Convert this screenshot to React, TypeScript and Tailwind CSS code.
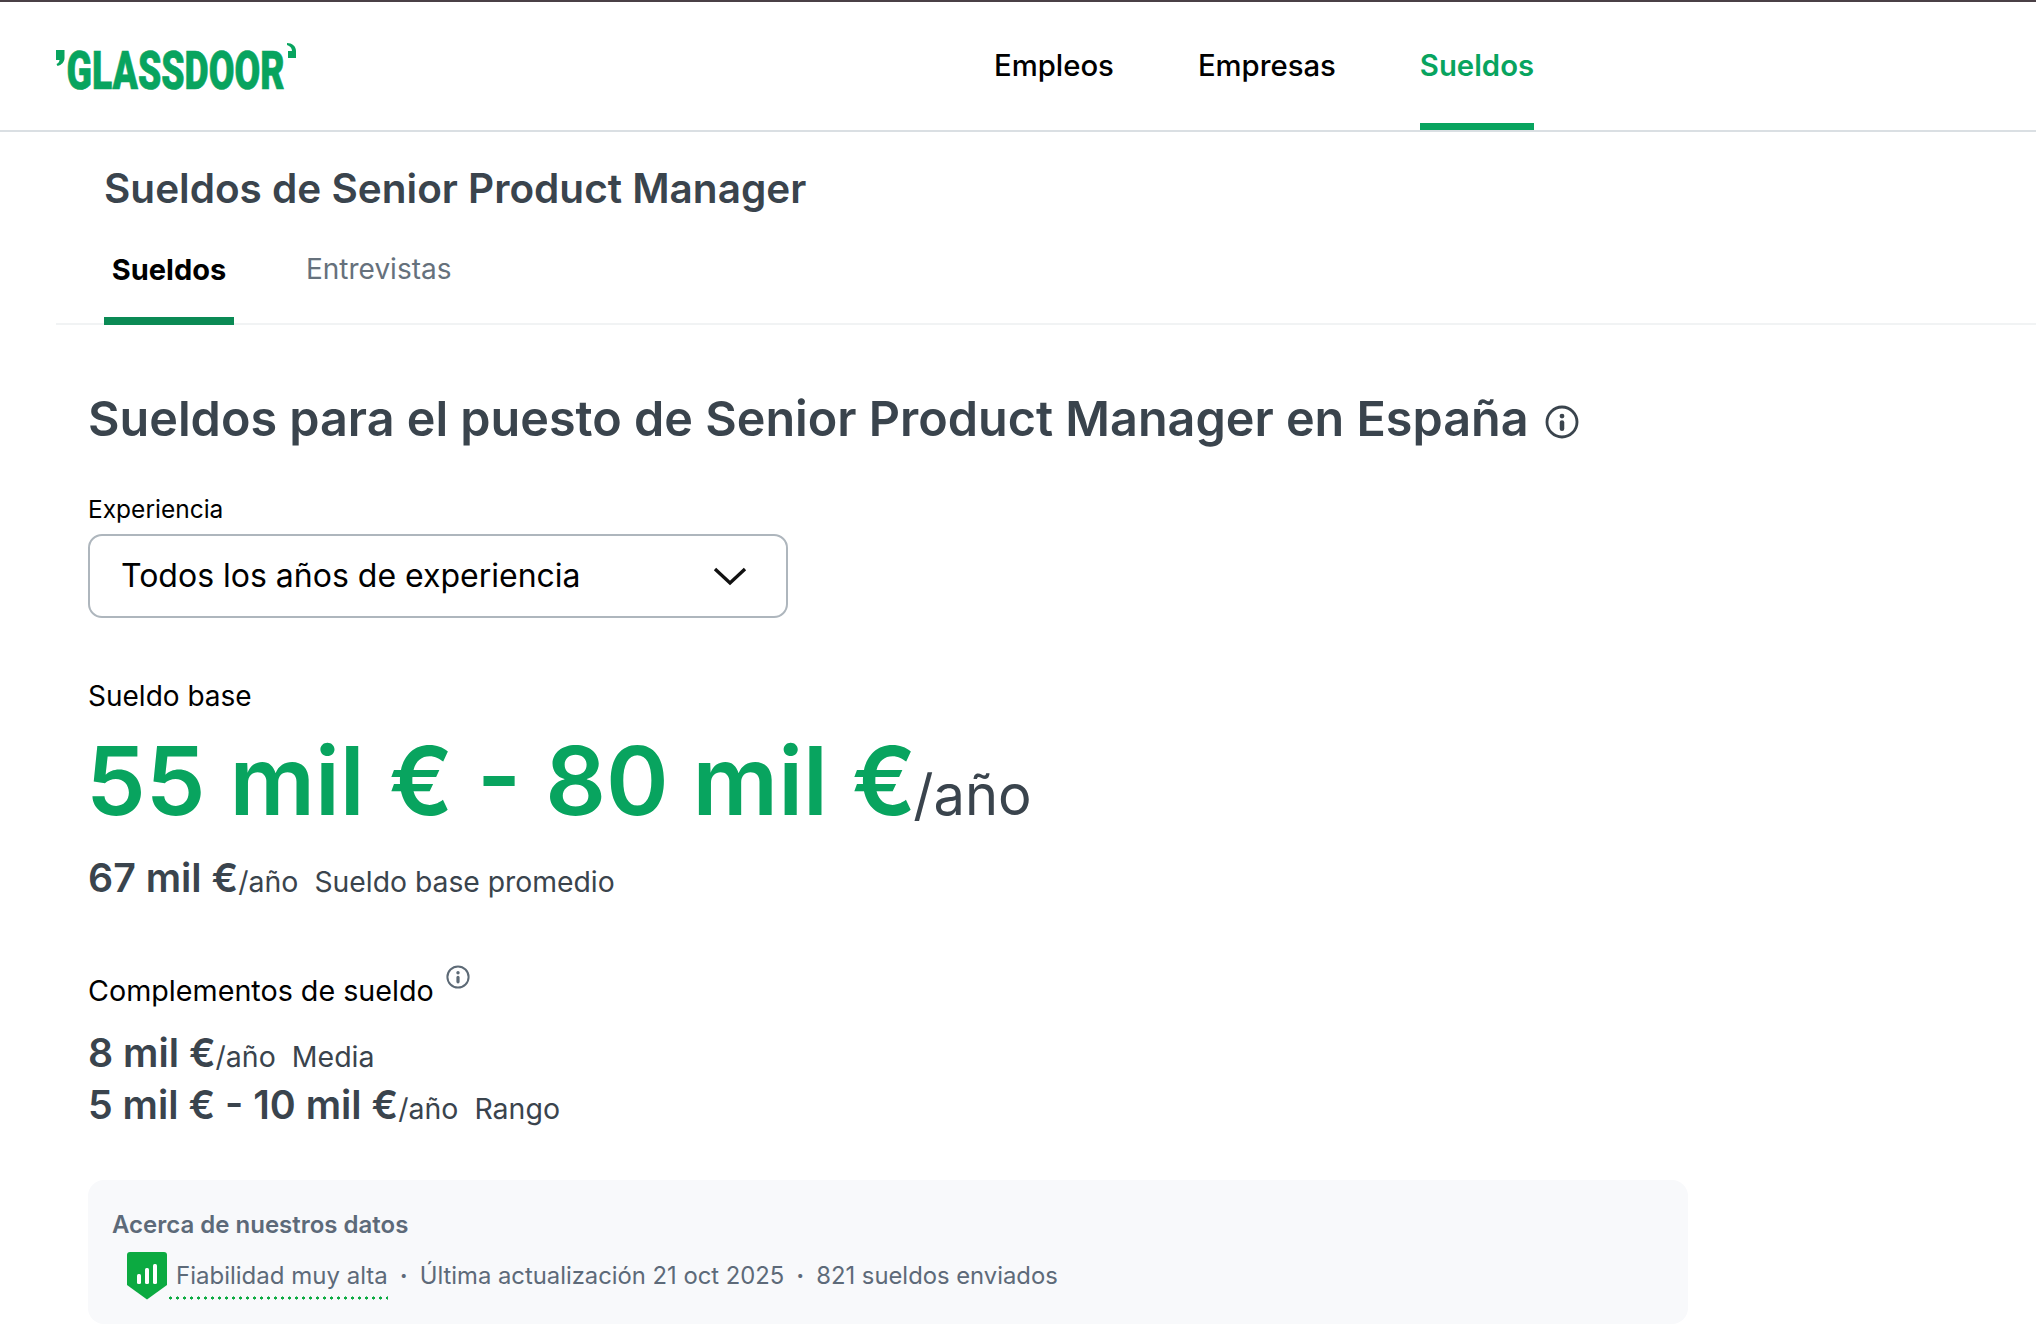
function Info({ size, color }: { size: number; color: string }) {
  return (
    <svg width={size} height={size} viewBox="0 0 24 24" fill="none" className="shrink-0">
      <circle cx="12" cy="12" r="10.6" stroke={color} strokeWidth="2" />
      <circle cx="12" cy="7.8" r="1.7" fill={color} />
      <rect x="10.4" y="10.8" width="3.2" height="7.6" rx="1.6" fill={color} />
    </svg>
  );
}

function Logo() {
  return (
    <svg width="250" height="62" viewBox="0 0 250 62" className="block">
      <path d="M0 7h8.500v8c0 4-3 7-7 8l-1-2c2-1 3-2.500 3-4H0z" fill="#08a45f" />
      <g transform="translate(10.500 46) scale(0.691 1)">
        <text x="0" y="0" fontFamily="Roboto, 'Liberation Sans', sans-serif" fontWeight="900" fontSize="54" fill="#08a45f" stroke="#08a45f" strokeWidth="0.7">GLASSDOOR</text>
      </g>
      <path d="M231 0c5 0 9 3 9 8v7h-8V8h4c0-3-2-5-5-6z" fill="#08a45f" />
    </svg>
  );
}

function Big({ children }: { children: React.ReactNode }) {
  return <span className="text-[39.300px] leading-[52px] font-semibold text-[#3a444d]">{children}</span>;
}

export default function App() {
  return (
    <div className="min-h-[1342px] bg-white overflow-hidden font-['Inter',sans-serif] text-black">
      <div className="h-[2px] bg-[#4a4046]" />
      <header className="h-[130px] border-b-2 border-[#dadfe3] flex pl-[56px]">
        <div className="w-[938px] h-[128px] pt-[41px]"><Logo /></div>
        <nav className="flex gap-[84px] text-[29.300px] font-medium">
          <a className="pt-[42px]">Empleos</a>
          <a className="pt-[42px]">Empresas</a>
          <a className="pt-[42px] text-[#08a45f] font-semibold h-[128px] border-b-[7px] border-[#08a45f]">Sueldos</a>
        </nav>
      </header>

      <div className="ml-[56px] border-b-2 border-[#f1f3f4] h-[193px]">
        <h2 className="ml-[48px] pt-[32px] text-[40.500px] leading-[50px] font-semibold text-[#3a444d]">Sueldos de Senior Product Manager</h2>
        <div className="ml-[48px] mt-[19px] flex gap-[72px] text-[28px]">
          <div className="w-[130px] h-[92px] pt-[15px] text-center text-[29px] border-b-[8px] border-[#0b8a55] font-bold">Sueldos</div>
          <div className="pt-[15px] text-[#66717c]">Entrevistas</div>
        </div>
      </div>

      <main className="ml-[88px]">
        <div className="mt-[62px] flex items-center gap-[16px]">
          <h1 className="text-[48.500px] leading-[64px] font-semibold text-[#3a444d]">Sueldos para el puesto de Senior Product Manager en España</h1>
          <span className="mt-[6px]"><Info size={34} color="#3a444d" /></span>
        </div>

        <div className="mt-[42px] text-[24.500px] leading-[32px]">Experiencia</div>
        <div className="mt-[9px] w-[700px] h-[84px] border-2 border-[#aeb6bd] rounded-[14px] flex items-center justify-between pl-[31px] pr-[39px] text-[32px]">
          <span>Todos los años de experiencia</span>
          <svg width="34" height="20" viewBox="0 0 34 20" fill="none"><path d="M2 3l15 14L32 3" stroke="#111" strokeWidth="3.400" /></svg>
        </div>

        <div className="mt-[60px] text-[28px] leading-[36px]">Sueldo base</div>
        <div className="mt-[13px] flex items-baseline text-[#3a444d]">
          <span className="ml-[-2px] text-[95px] leading-[108px] font-semibold text-[#08a45f]">55 mil € - 80 mil €</span>
          <span className="ml-[-3px] text-[56px] leading-[60px]">/año</span>
        </div>
        <div className="mt-[17px] flex items-baseline text-[#3a444d]">
          <Big>67 mil €</Big>
          <span className="text-[28.500px]">/año</span>
          <span className="ml-[16px] text-[28.300px]">Sueldo base promedio</span>
        </div>

        <div className="mt-[53px] flex items-start">
          <span className="mt-[14px] text-[28.700px] leading-[40px]">Complementos de sueldo</span>
          <span className="ml-[12px] mt-[8px]"><Info size={24} color="#5d6a76" /></span>
        </div>
        <div className="mt-[16px] flex items-baseline text-[#3a444d]">
          <Big>8 mil €</Big>
          <span className="text-[28.500px]">/año</span>
          <span className="ml-[16px] text-[28.500px]">Media</span>
        </div>
        <div className="flex items-baseline text-[#3a444d]">
          <Big>5 mil € - 10 mil €</Big>
          <span className="text-[28.500px]">/año</span>
          <span className="ml-[16px] text-[28.500px]">Rango</span>
        </div>

        <section className="mt-[49px] w-[1600px] h-[144px] rounded-[16px] bg-[#f8f9fb] pl-[24px] pt-[30px] text-[#5d6a79]">
          <div className="text-[24px] leading-[30px] font-semibold">Acerca de nuestros datos</div>
          <div className="mt-[18px] ml-[15px] flex items-start text-[23.800px] leading-[36px]">
            <svg width="40" height="48" viewBox="0 0 40 48" className="mt-[-6px] shrink-0">
              <path d="M3 0h34a3 3 0 0 1 3 3v30L20 47.500 0 33V3a3 3 0 0 1 3-3z" fill="#0caa41" />
              <rect x="10" y="22" width="4" height="10" rx="1.500" fill="#fff" />
              <rect x="18" y="16" width="4" height="16" rx="1.500" fill="#fff" />
              <rect x="26" y="12" width="4" height="20" rx="1.500" fill="#fff" />
            </svg>
            <span className="pl-[9px] pb-[6px] text-[24px] bg-[radial-gradient(circle,#0caa41_1.400px,transparent_1.700px)] bg-[length:7px_4px] bg-repeat-x bg-[position:left_bottom]">Fiabilidad muy alta</span>
            <span className="mx-[12px] font-bold">·</span>
            <span>Última actualización 21 oct 2025</span>
            <span className="mx-[12px] font-bold">·</span>
            <span>821 sueldos enviados</span>
          </div>
        </section>
      </main>
    </div>
  );
}
